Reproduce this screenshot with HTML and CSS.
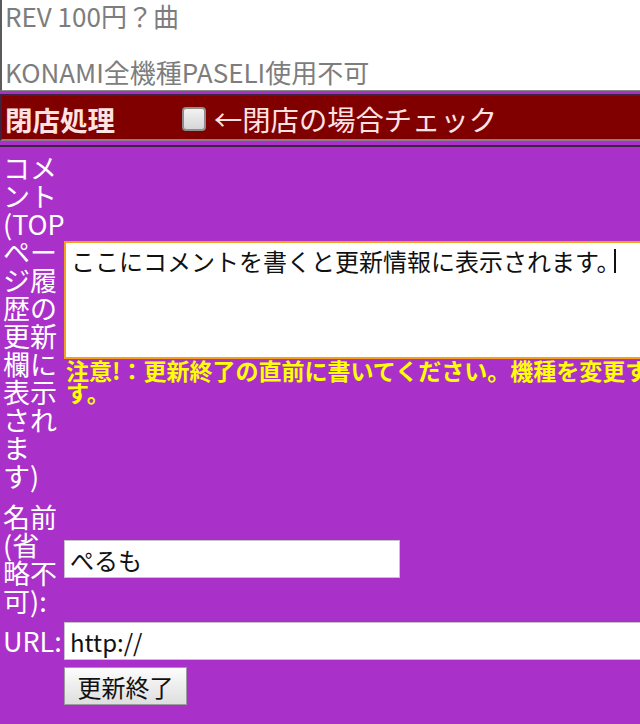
FILE: index.html
```
<!DOCTYPE html>
<html lang="ja">
<head>
    <meta charset="UTF-8">
    <meta name="viewport" content="width=device-width, initial-scale=1.0">
    <title>更新</title>
    <link rel="stylesheet" href="styles.css">
</head>
<body>
    <div class="memo">REV 100円？曲

KONAMI全機種PASELI使用不可</div>

    <div class="closing">
        <span class="closing-title">閉店処理</span>
        <input type="checkbox" class="closing-check" name="closed">
        <span class="closing-note">←閉店の場合チェック</span>
    </div>

    <form class="entry">
        <div class="entry-label first">コメント(TOPページ履歴の更新欄に表示されます)</div>
        <div class="entry-field first">
            <div class="comment-box">
                <textarea class="comment" name="comment">ここにコメントを書くと更新情報に表示されます。</textarea>
                <span class="caret"></span>
            </div>
            <p class="notice">注意!：更新終了の直前に書いてください。機種を変更すると消えてしまいます。</p>
        </div>

        <div class="entry-label">名前(省略不可):</div>
        <div class="entry-field">
            <input type="text" class="text-input name" name="name" value="ぺるも">
        </div>

        <div class="entry-label">URL:</div>
        <div class="entry-field">
            <input type="text" class="text-input url" name="url" value="http://">
        </div>

        <div class="entry-label"></div>
        <div class="entry-field">
            <button type="button" class="submit">更新終了</button>
        </div>
    </form>
</body>
</html>
```

FILE: styles.css
```
:root {
    --purple: #a931c9;
    --dark-red: #800000;
    --edge-dark: #3e2340;
    --edge-light: #8a7a8c;
    --warning: #ffff00;
    --jp: "Noto Sans CJK JP", "Noto Sans", sans-serif;
}

html, body {
    overflow: hidden;
}

body {
    margin: 0;
    background: var(--purple);
    font-family: var(--jp);
}

/* 上のメモ欄 */
.memo {
    box-sizing: border-box;
    height: 91px;
    padding: 2px 0 0 3px;
    background: #fff;
    border-left: 2px solid #5a5a5a;
    border-bottom: 1px solid #8c8c8c;
    color: #7d7d7d;
    font-size: 26px;
    line-height: 28px;
    white-space: pre-line;
}

/* 閉店処理 */
.closing {
    display: flex;
    align-items: center;
    height: 43px;
    margin-top: 3px;
    padding-left: 3px;
    background: var(--dark-red);
    border-top: 2px solid var(--edge-dark);
    border-left: 2px solid var(--edge-dark);
    border-bottom: 2px solid var(--edge-light);
    color: #ffe2e2;
}

.closing-title {
    margin-top: 4px;
    font-size: 27.5px;
    font-weight: bold;
    line-height: 1;
}

.closing-check {
    appearance: none;
    -webkit-appearance: none;
    box-sizing: border-box;
    width: 24px;
    height: 24px;
    margin: 2px 8px 0 67px;
    border: 2px solid #8e8e8e;
    border-radius: 4px;
    background: linear-gradient(#f2f2f2, #d6d6d6);
}

.closing-note {
    margin-top: 4px;
    font-size: 28.3px;
    line-height: 1;
}

/* 入力フォーム */
.entry {
    display: grid;
    grid-template-columns: 64px 800px;
    row-gap: 7px;
    align-items: center;
    margin: 4px 0 0;
    padding-top: 7px;
    border-top: 2px solid var(--edge-dark);
}

.entry-label {
    padding-left: 3px;
    color: #fff;
    font-size: 27px;
    line-height: 28px;
}

.entry-label.first,
.entry-field.first {
    margin-bottom: 6px;
}

.comment-box {
    position: relative;
}

.comment {
    display: block;
    box-sizing: border-box;
    width: 100%;
    height: 118px;
    margin: 0;
    padding: 4px 5px;
    border: 2px solid #f2a01e;
    background: #fff;
    color: #111;
    font-family: var(--jp);
    font-size: 24px;
    line-height: 28px;
    resize: none;
    outline: none;
}

.caret {
    position: absolute;
    top: 8px;
    left: 550px;
    width: 2px;
    height: 24px;
    background: #111;
}

.notice {
    margin: 0;
    padding-left: 2px;
    color: var(--warning);
    font-size: 23px;
    font-weight: bold;
    line-height: 22px;
}

.text-input {
    display: block;
    box-sizing: border-box;
    height: 38px;
    margin: 0;
    padding: 0 5px;
    border: 1px solid #c9c0cc;
    background: #fff;
    color: #111;
    font-family: var(--jp);
    font-size: 24px;
    outline: none;
}

.name {
    width: 336px;
}

.url {
    width: 100%;
}

.submit {
    display: block;
    box-sizing: border-box;
    width: 123px;
    height: 38px;
    margin: 0;
    padding: 0;
    border: 1px solid #9c9c9c;
    border-radius: 0;
    background: linear-gradient(#fdfdfd, #dedede);
    color: #111;
    font-family: var(--jp);
    font-size: 24px;
}
```
